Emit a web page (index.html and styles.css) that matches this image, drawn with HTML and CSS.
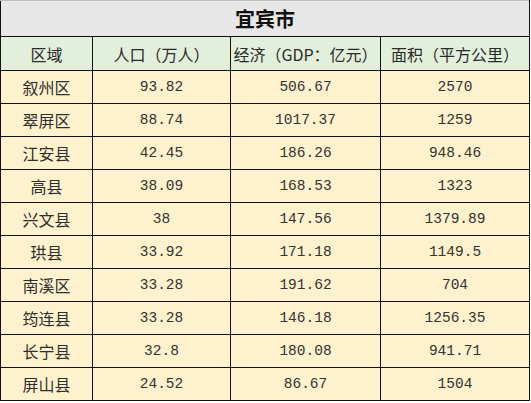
FILE: index.html
```html
<!DOCTYPE html>
<html lang="zh-CN">
<head>
<meta charset="utf-8">
<title>宜宾市</title>
<link rel="stylesheet" href="styles.css">
</head>
<body>
<table class="city">
  <colgroup>
    <col class="c1"><col class="c2"><col class="c3"><col class="c4">
  </colgroup>
  <thead>
    <tr class="title"><th colspan="4">宜宾市</th></tr>
    <tr class="head"><th>区域</th><th>人口（万人）</th><th>经济（GDP：亿元）</th><th>面积（平方公里）</th></tr>
  </thead>
  <tbody>
    <tr><td>叙州区</td><td class="num">93.82</td><td class="num">506.67</td><td class="num">2570</td></tr>
    <tr><td>翠屏区</td><td class="num">88.74</td><td class="num">1017.37</td><td class="num">1259</td></tr>
    <tr><td>江安县</td><td class="num">42.45</td><td class="num">186.26</td><td class="num">948.46</td></tr>
    <tr><td>高县</td><td class="num">38.09</td><td class="num">168.53</td><td class="num">1323</td></tr>
    <tr><td>兴文县</td><td class="num">38</td><td class="num">147.56</td><td class="num">1379.89</td></tr>
    <tr><td>珙县</td><td class="num">33.92</td><td class="num">171.18</td><td class="num">1149.5</td></tr>
    <tr><td>南溪区</td><td class="num">33.28</td><td class="num">191.62</td><td class="num">704</td></tr>
    <tr><td>筠连县</td><td class="num">33.28</td><td class="num">146.18</td><td class="num">1256.35</td></tr>
    <tr><td>长宁县</td><td class="num">32.8</td><td class="num">180.08</td><td class="num">941.71</td></tr>
    <tr><td>屏山县</td><td class="num">24.52</td><td class="num">86.67</td><td class="num">1504</td></tr>
  </tbody>
</table>
</body>
</html>
```
FILE: styles.css
```css
html, body {
  margin: 0;
  padding: 0;
  background: #ffffff;
}

.city {
  border-collapse: collapse;
  table-layout: fixed;
  width: 529px;
  margin: 0;
  font-family: "Noto Sans CJK SC", "Liberation Sans", sans-serif;
  font-size: 16px;
  color: #2e2e2e;
}

.c1 { width: 92px; }
.c2 { width: 138px; }
.c3 { width: 150px; }
.c4 { width: 149px; }

.city th,
.city td {
  border: 1px solid #111;
  padding: 0;
  text-align: center;
  vertical-align: middle;
  font-weight: normal;
  line-height: 16px;
  white-space: nowrap;
  overflow: hidden;
}

.city .title th {
  height: 35px;
  background: #e7e7e7;
  border-top-color: #bdbdbd;
  font-size: 20px;
  line-height: 20px;
  font-weight: bold;
  color: #111;
}

.city .head th {
  height: 33px;
  background: #e2efda;
  color: #2a2a2a;
}

.city tbody td {
  height: 32px;
  background: #fef1cd;
}

.city td.num {
  font-family: "Liberation Mono", "Noto Sans CJK SC", monospace;
  font-size: 14.5px;
  color: #333;
}
```
